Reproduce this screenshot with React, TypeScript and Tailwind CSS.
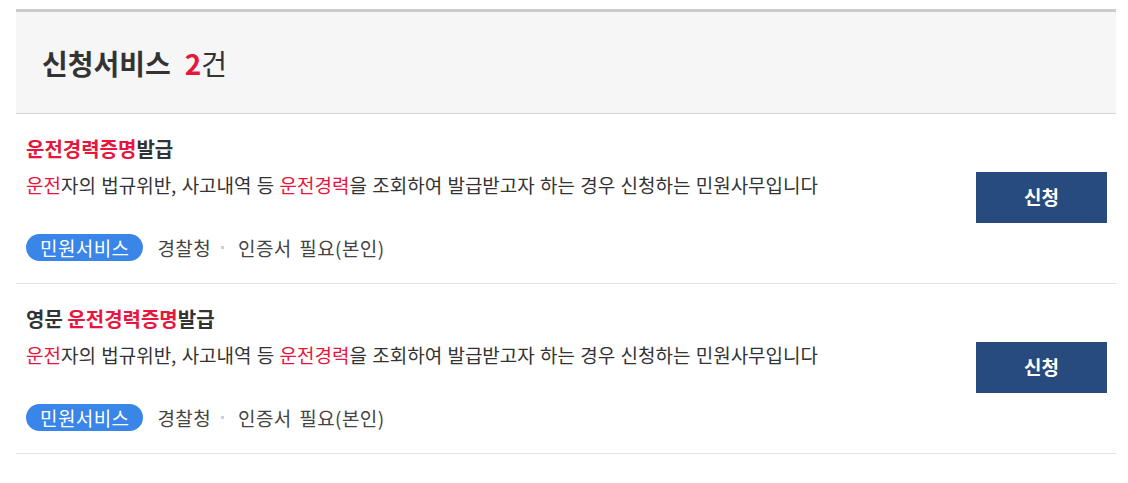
import React from 'react';

type Item = {
  prefix?: string;
  id: number;
};

const items: Item[] = [{ id: 1 }, { id: 2, prefix: '영문 ' }];

const ServiceRow: React.FC<{ item: Item }> = ({ item }) => (
  <div className="flex items-center border-b border-[#e3e3e3] pl-[10px] pr-[9px] pt-[22px] pb-[22px]">
    <div className="flex-1">
      <div className="text-[20px] leading-[26px] font-bold text-[#333]">
        {item.prefix}
        <span className="text-[#e8163c]">운전경력증명</span>발급
      </div>
      <p className="mt-[10px] text-[19px] leading-[26px] text-[#333] [word-spacing:1px]">
        <span className="text-[#e8163c]">운전</span>자의 법규위반, 사고내역 등{' '}
        <span className="text-[#e8163c]">운전경력</span>을 조회하여 발급받고자 하는 경우 신청하는 민원사무입니다
      </p>
      <div className="mt-[36px] flex items-center h-[27px] text-[19px] leading-[27px] text-[#444] tracking-[0.4px]">
        <span className="h-[27px] flex items-center rounded-full bg-[#3a86e8] px-[14px] text-white leading-none">
          민원서비스
        </span>
        <span className="ml-[14px]">경찰청</span>
        <span className="ml-[10px] mr-[14px] h-[3px] w-[3px] bg-[#d0d0d0]" />
        <span className="[word-spacing:3px]">인증서 필요(본인)</span>
      </div>
    </div>
    <button className="mb-[2px] h-[51px] w-[131px] bg-[#284b7e] text-[19px] font-bold text-white">
      신청
    </button>
  </div>
);

export default function App() {
  return (
    <div
      className="bg-white min-h-[483px] pt-[9px]"
      style={{ fontFamily: '"Noto Sans CJK KR", "Noto Sans", sans-serif' }}
    >
      <div className="ml-4 w-[1100px]">
        <div className="h-[105px] border-t-[3px] border-b border-t-[#cccccc] border-b-[#d4d4d4] bg-[#f6f6f6] flex items-center pl-[26px]">
          <h2 className="text-[28px] font-bold text-[#333]">
            신청서비스<span className="ml-[14px] text-[#e8163c]">2</span>
            <span className="font-normal">건</span>
          </h2>
        </div>
        {items.map((item) => (
          <ServiceRow key={item.id} item={item} />
        ))}
      </div>
    </div>
  );
}
